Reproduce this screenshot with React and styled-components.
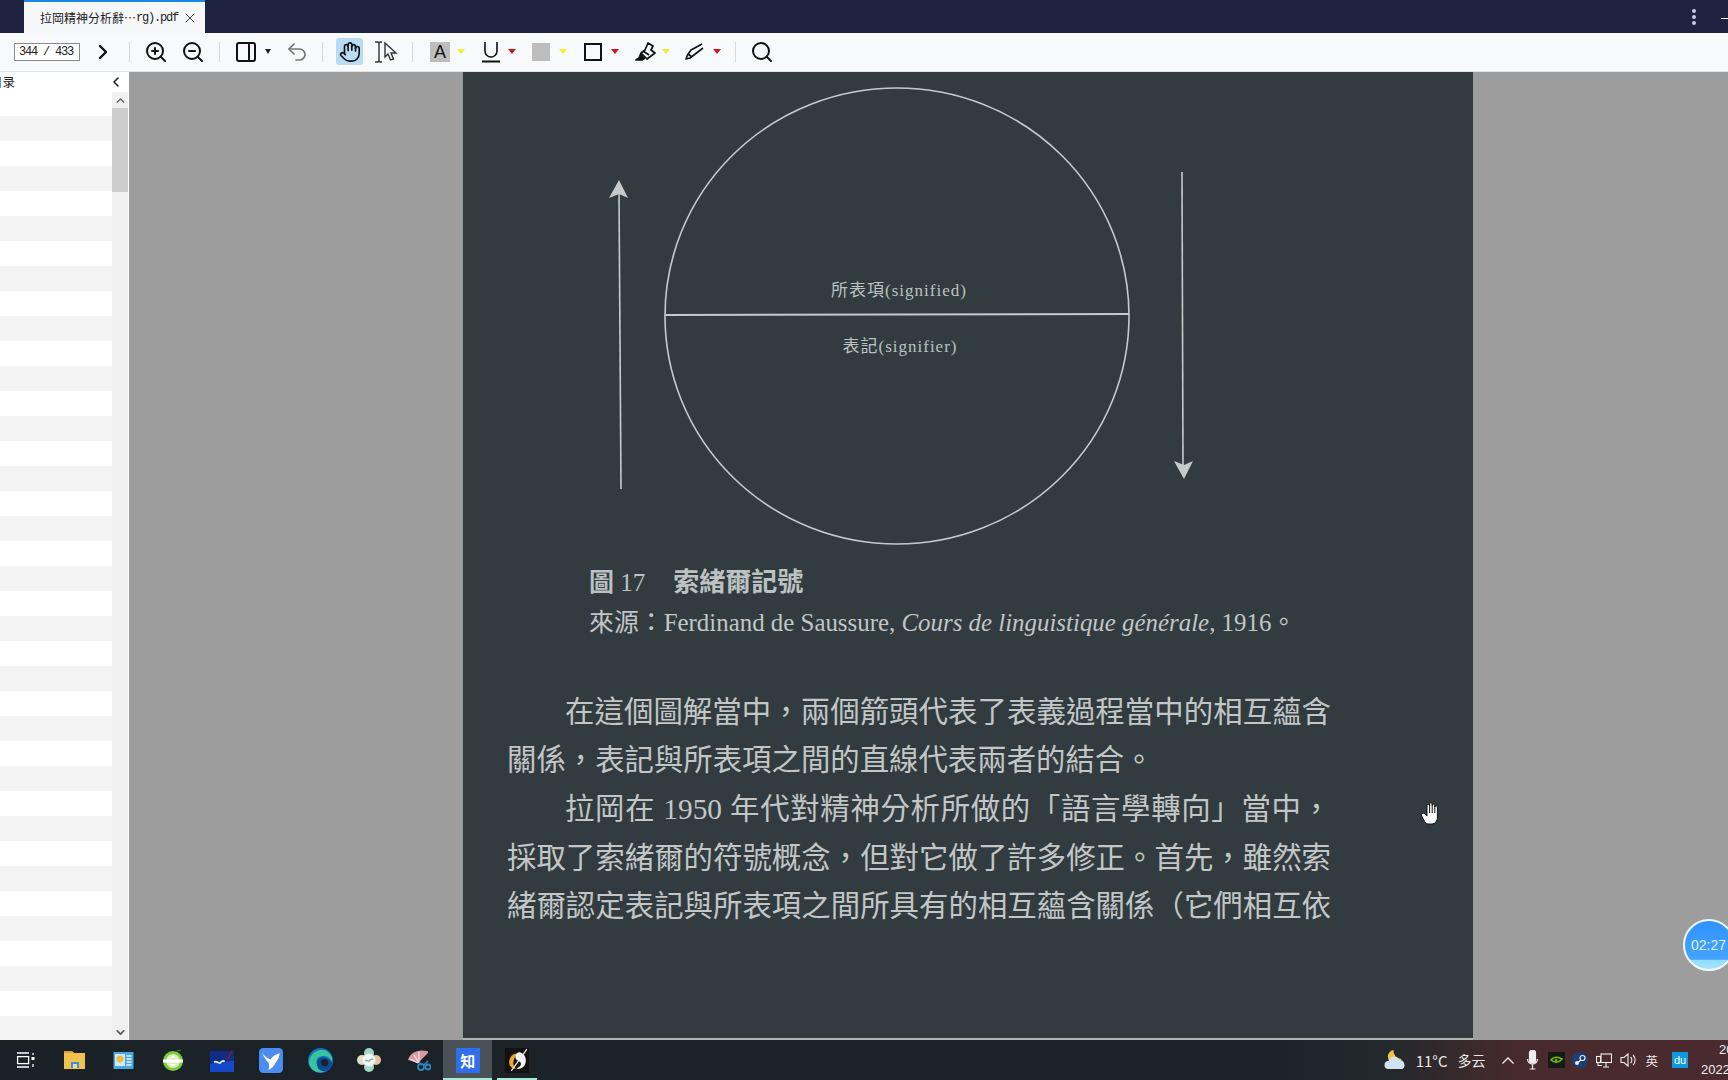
import React from 'react';
import styled, { createGlobalStyle } from 'styled-components';
import { ChevronRight, ChevronLeft, ChevronUp, ChevronDown, ZoomIn, ZoomOut, PanelRight, Undo2, Hand, Search, X } from 'lucide-react';

const Global = createGlobalStyle`
  html, body { margin: 0; padding: 0; background: #9d9d9d; overflow: hidden; }
  #root { width: 1728px; height: 1080px; }
  * { box-sizing: border-box; }
`;
const Shell = styled.div`
  position: relative; width: 1728px; height: 1080px; overflow: hidden;
  display: flex; flex-direction: column;
  font-family: "Liberation Sans", "Noto Sans CJK SC", sans-serif;
`;
const TitleBar = styled.div`
  height: 33px; background: #1c2240; display: flex; align-items: flex-end; padding-left: 24px; flex: none;
`;
const Tab = styled.div`
  width: 181px; height: 33px; background: #f6f7f9; border-top: 2px solid #1a86e8;
  display: flex; align-items: center; padding-left: 16px; color: #222; font-size: 12px;
  font-family: "Noto Sans CJK SC", sans-serif;
`;
const Mono = styled.span`
  font-family: "Liberation Mono", monospace; font-size: 12px; letter-spacing: -1.2px;
`;
const TabClose = styled.span`
  display: flex; margin-left: 4px; color: #444;
`;
const WinControls = styled.div`
  margin-left: auto; height: 33px; display: flex; align-items: center; gap: 25px;
`;
const Dots = styled.div`
  display: flex; flex-direction: column; gap: 2px;
`;
const Dot = styled.span`
  width: 4px; height: 4px; border-radius: 50%; background: #c6cbe0;
`;
const Dash = styled.span`
  width: 7px; height: 1px; background: #fff; margin-top: 3px;
`;
const Toolbar = styled.div`
  height: 39px; flex: none; background: #f8f9fa; border-bottom: 1px solid #e2e2e2;
  display: flex; align-items: center; padding-left: 14px; padding-bottom: 1px;
`;
const PageInput = styled.div`
  width: 66px; height: 18px; border: 1px solid #8a8a8a; background: #fff; color: #222;
  display: flex; align-items: center; padding-left: 4px;
`;
const Tool = styled.div`
  flex: none; width: ${p => p.$w}px; height: ${p => p.$h || 24}px; margin-left: ${p => p.$ml || 0}px;
  display: flex; align-items: center; justify-content: center; color: ${p => p.$color || '#111'};
  background: ${p => p.$bg || 'transparent'}; border-radius: ${p => p.$radius || 0}px;
`;
const Sep = styled.div`
  flex: none; width: 1px; height: 20px; background: #d8d8d8; margin-left: ${p => p.$ml}px;
`;
const Caret = styled.div`
  flex: none; width: 0; height: 0; margin-left: ${p => p.$ml}px;
  border-left: ${p => p.$size || 4.5}px solid transparent; border-right: ${p => p.$size || 4.5}px solid transparent;
  border-top: 5px solid ${p => p.$color};
`;
const LetterBox = styled.div`
  flex: none; width: 20px; height: 20px; margin-left: ${p => p.$ml}px; background: #bdbdbd; color: #111;
  font-size: 18px; display: flex; align-items: center; justify-content: center; line-height: 1;
`;
const GrayBox = styled.div`
  flex: none; width: 18px; height: 18px; margin-left: ${p => p.$ml}px; background: #bdbdbd;
`;
const SquareBox = styled.div`
  flex: none; width: 18px; height: 18px; margin-left: ${p => p.$ml}px; border: 2px solid #111;
`;
const Body = styled.div`
  flex: 1; min-height: 0; display: flex; overflow: hidden;
`;
const Sidebar = styled.aside`
  width: 129px; flex: none; background: #fff; display: flex; flex-direction: column; overflow: hidden;
`;
const SideHead = styled.div`
  height: 19px; flex: none; display: flex; align-items: center; justify-content: space-between;
  padding-right: 5px; font-size: 12.5px; color: #222;
  font-family: "Noto Sans CJK SC", sans-serif;
`;
const SideTitle = styled.span`
  margin-left: -10px;
`;
const SideMain = styled.div`
  flex: 1; min-height: 0; display: flex; padding-right: 1px;
`;
const Rows = styled.div`
  flex: 1; min-width: 0; overflow: hidden;
`;
const Row = styled.div`
  height: 25px; background: ${p => (p.$alt ? '#f3f3f3' : '#fff')};
`;
const Scrollbar = styled.div`
  width: 16px; flex: none; background: #f0f0f0; display: flex; flex-direction: column; color: #555; margin-top: 1px;
`;
const ScrollBtn = styled.div`
  height: 16px; flex: none; display: flex; align-items: center; justify-content: center;
`;
const Thumb = styled.div`
  height: 84px; flex: none; background: #cdcdcd;
`;
const Spacer = styled.div`
  flex: 1;
`;
const Viewer = styled.main`
  flex: 1; background: #9d9d9d; overflow: hidden; padding-left: 333px;
`;
const PageSheet = styled.article`
  width: 1011px; height: 968px; background: #323c40; color: #c2c6c6; overflow: hidden;
  border-left: 1px solid #8f9797; border-bottom: 2px solid #aeb3b3;
  font-family: "Liberation Serif", "Noto Sans CJK TC", serif;
`;
const Diagram = styled.svg`
  display: block; width: 1010px; height: 492px;
`;
const Caption = styled.div`
  height: 39px; line-height: 38px; padding-left: 126px; font-size: 25px; white-space: nowrap; color: #bcc1c1;
`;
const CaptionMark = styled.b`
  font-weight: 700;
`;
const CaptionTitle = styled.b`
  font-size: 26px; margin-left: 28px; font-weight: 700;
`;
const Source = styled.div`
  height: 40px; line-height: 40px; padding-left: 126px; font-size: 24.9px; white-space: nowrap;
`;
const Article = styled.div`
  margin-top: 44.5px; padding-left: 44px; width: 868px; font-size: 29.4px; line-height: 48.7px;
`;
const Line = styled.div`
  text-align: ${p => (p.$short ? 'left' : 'justify')}; text-align-last: ${p => (p.$short ? 'left' : 'justify')};
  padding-left: ${p => (p.$indent ? 58 : 0)}px;
`;
const Taskbar = styled.footer`
  height: 40px; flex: none; display: flex; align-items: center; padding-left: 0.5px;
  background: linear-gradient(to right, #1a2228 0%, #1c2328 72%, #22282c 80%, #482a2c 88%, #4a2a2e 100%);
`;
const TaskCell = styled.div`
  position: relative; width: 49.2px; height: 40px; flex: none; display: flex; align-items: center; justify-content: center;
  background: ${p => (p.$active ? '#4a5257' : 'transparent')};
`;
const Indicator = styled.span`
  position: absolute; left: ${p => p.$inset}px; right: ${p => p.$inset}px; bottom: 0; height: 2px; background: #a5ecd8;
`;
const Zhi = styled.div`
  width: 24px; height: 25px; background: #2f6fee; color: #fff; font-size: 15px; font-weight: 700;
  display: flex; align-items: center; justify-content: center; font-family: "Noto Sans CJK SC", sans-serif;
`;
const Tray = styled.div`
  margin-left: auto; height: 40px; display: flex; align-items: center; color: #e8e8e8; font-size: 15px;
  font-family: "Noto Sans CJK SC", sans-serif;
`;
const TrayItem = styled.div`
  flex: none; margin-left: ${p => p.$ml}px; display: flex; align-items: center; justify-content: center; white-space: nowrap;
  font-size: ${p => p.$fs || 14}px;
`;
const Du = styled.div`
  width: 16px; height: 16px; background: #0f9ae0; color: #fff; font-size: 11px; font-family: "Liberation Sans", sans-serif;
  display: flex; align-items: center; justify-content: center;
`;
const Clock = styled.div`
  width: 27px; margin-left: 13px; flex: none; overflow: hidden; font-size: 13px; color: #eee; line-height: 20px;
  font-family: "Liberation Sans", sans-serif;
`;
const ClockTop = styled.div`
  padding-left: 18px;
`;
const Timer = styled.div`
  position: absolute; left: 1683px; top: 919px; width: 52px; height: 52px; border-radius: 50%; border: 2px solid #f2f8fa;
  background: linear-gradient(to bottom, #2f93ff 0%, #45a4fb 80%, #8fdcff 81%, #a6e4fb 100%);
  color: #dff4ff; font-size: 14px; display: flex; align-items: center; justify-content: center; padding-right: 1px;
  font-family: "Liberation Sans", sans-serif;
`;
const Cursor = styled.div`
  position: absolute; left: 1418px; top: 800px; display: flex;
`;

const stroke = '#c6caca';

function TaskIcons() {
  return [
    <svg key="a" width="22" height="22" viewBox="0 0 22 22" fill="none" stroke="#fff" strokeWidth="1.3">
      <path d="M3 4h12M3 18h12" /><rect x="3.6" y="7.6" width="11" height="7" /><path d="M19 4v2M19 15v3" /><rect x="17.5" y="8" width="3" height="3" fill="#fff" stroke="none" />
    </svg>,
    <svg key="b" width="23" height="20" viewBox="0 0 23 20">
      <path d="M1 1h8l2 2h11v16H1z" fill="#f2c14e" /><path d="M1 1h8l2 2H1z" fill="#e0a030" /><rect x="8" y="12" width="8" height="6" fill="#3a8fd8" /><rect x="10" y="14" width="4" height="4" fill="#f2d98e" />
    </svg>,
    <svg key="c" width="21" height="17" viewBox="0 0 20 17">
      <rect width="20" height="17" fill="#4aa6e0" /><rect x="1.5" y="2" width="10" height="12" fill="#cfe9f8" /><circle cx="6.5" cy="7" r="3.5" fill="#f0b93a" /><path d="M13 4h5M13 7h5M13 10h5M13 13h5" stroke="#eaf6fd" strokeWidth="1.4" />
    </svg>,
    <svg key="d" width="22" height="23" viewBox="0 0 22 23">
      <circle cx="11" cy="12" r="10" fill="#7ecb3f" /><circle cx="11" cy="12" r="7" fill="#d8efb9" /><rect x="1" y="10.5" width="20" height="3" fill="#fff" /><path d="M8 9l3-3 3 3zM8 15l3 3 3-3z" fill="#fff" /><path d="M15 2l4-1" stroke="#3c8a2a" strokeWidth="1.2" />
    </svg>,
    <svg key="e" width="24" height="23" viewBox="0 0 23 22">
      <rect y="2" width="23" height="20" fill="#1447c9" /><path d="M0 2h23v9L0 14z" fill="#0f2c86" /><path d="M4 13c2-3 4 2 6 0s3-2 4-1" stroke="#dff" strokeWidth="1.6" fill="none" /><path d="M15 10l6-9 1 1-5 9z" fill="#6a2030" />
    </svg>,
    <svg key="f" width="24" height="25" viewBox="0 0 23 24">
      <rect width="23" height="24" rx="4" fill="#4d8df0" /><path d="M3 5c3 3 5 5 8 6 2-3 5-5 9-6-1 4-2 7-4 9-1 3-4 6-7 7 1-3 1-5 0-7-2-2-4-5-6-9z" fill="#fff" />
    </svg>,
    <svg key="g" width="25" height="25" viewBox="0 0 24 24">
      <circle cx="12" cy="12" r="12" fill="#1a6fbf" /><path d="M1 13C2 5 9 1 15 2c5 1 9 6 8 11-2-4-6-6-10-5-5 1-6 5-4 9 1 2 4 4 8 4-2 2-5 3-8 2C4 22 1 18 1 13z" fill="#37c5a0" /><path d="M9 13c0-3 3-4 6-4 4 0 7 3 8 6-1 5-6 8-9 7-3 0-6-3-5-9z" fill="#0c4a96" /><circle cx="16" cy="14" r="3.5" fill="#1b2329" />
    </svg>,
    <svg key="h" width="24" height="24" viewBox="0 0 24 24">
      <circle cx="12" cy="5" r="5" fill="#9cd6c6" /><circle cx="12" cy="19" r="5" fill="#a3d9c9" /><circle cx="5" cy="12" r="5" fill="#e9dcc4" /><circle cx="19" cy="12" r="5" fill="#e6c29e" /><circle cx="12" cy="12" r="6.5" fill="#eef5f2" /><path d="M8 13c2-2 3 1 4 0s3-3 4-1" stroke="#6fa8c4" strokeWidth="1.3" fill="none" />
    </svg>,
    <svg key="i" width="24" height="24" viewBox="0 0 24 24">
      <path d="M1 12C3 5 10 1 20 3c2 1 1 2 0 3L11 15z" fill="#d89aa2" /><path d="M3 11l8 4M7 7l5 8M12 4l0 11" stroke="#f3e3e3" strokeWidth="1.2" /><circle cx="14" cy="19" r="3" fill="none" stroke="#2e86b8" strokeWidth="1.8" /><circle cx="21" cy="19" r="2.5" fill="none" stroke="#2e86b8" strokeWidth="1.8" /><path d="M12 14l3 3M21 13l-4 4" stroke="#2e86b8" strokeWidth="1.6" />
    </svg>,
    <Zhi key="j">知</Zhi>,
    <svg key="k" width="24" height="25" viewBox="0 0 23 24">
      <rect width="23" height="24" fill="#15110e" /><path d="M4 14c0-6 4-9 9-9-3 2-5 6-5 10 0 3 2 4 3 5-4 0-7-2-7-6z" fill="#e8a92c" /><path d="M14 4c4 1 6 4 6 8 0 5-4 9-9 8 3-2 5-3 4-6-1-2-5-2-5-5 0-3 2-5 4-5z" fill="#f4f4f4" /><path d="M21 1L6 22" stroke="#eee" strokeWidth="1.2" />
    </svg>,
  ];
}

export default function App() {
  const icons = TaskIcons();
  return (
    <Shell>
      <Global />
      <TitleBar>
        <Tab>
          拉岡精神分析辭<span>⋯</span><Mono>rg).pdf</Mono>
          <TabClose><X size={16} strokeWidth={1.5} /></TabClose>
        </Tab>
        <WinControls>
          <Dots><Dot /><Dot /><Dot /></Dots>
          <Dash />
        </WinControls>
      </TitleBar>
      <Toolbar>
        <PageInput><Mono>344 / 433</Mono></PageInput>
        <Tool $w={24} $ml={11}><ChevronRight size={24} strokeWidth={2.4} /></Tool>
        <Sep $ml={14} />
        <Tool $w={24} $ml={14}><ZoomIn size={24} strokeWidth={2} /></Tool>
        <Tool $w={24} $ml={13}><ZoomOut size={24} strokeWidth={2} /></Tool>
        <Sep $ml={14} />
        <Tool $w={24} $ml={14}><PanelRight size={24} strokeWidth={2} /></Tool>
        <Caret $ml={7} $size={3.5} $color="#222" />
        <Tool $w={24} $ml={14} $color="#777"><Undo2 size={24} strokeWidth={1.7} /></Tool>
        <Sep $ml={13} />
        <Tool $w={27} $h={27} $ml={13} $bg="#b9dcf5" $radius={3}><Hand size={22} strokeWidth={1.8} /></Tool>
        <Tool $w={24} $ml={11} $color="#444">
          <svg width="24" height="24" viewBox="0 0 24 24" fill="none" stroke="#333" strokeWidth="1.4">
            <path d="M1 2h3l1 1 1-1h2M5 3v18M1 22h3l1-1 1 1h2" />
            <path d="M11 3l11 10h-5l2.500 6-3 1-2.500-6-3 3z" fill="#f8f9fa" />
          </svg>
        </Tool>
        <Sep $ml={14} />
        <LetterBox $ml={17}>A</LetterBox>
        <Caret $ml={7} $color="#f3ee2a" />
        <Tool $w={22} $ml={15}>
          <svg width="20" height="22" viewBox="0 0 20 22" fill="none" stroke="#111" strokeWidth="1.6">
            <path d="M4 1v9a6 6 0 0 0 12 0V1" /><path d="M1 20.500h18" strokeWidth="2" />
          </svg>
        </Tool>
        <Caret $ml={6} $color="#d2121c" />
        <GrayBox $ml={16} />
        <Caret $ml={9} $color="#f3ee2a" />
        <SquareBox $ml={17} />
        <Caret $ml={9} $color="#d2121c" />
        <Tool $w={22} $ml={16}>
          <svg width="22" height="20" viewBox="0 0 22 20" fill="none" stroke="#111" strokeWidth="1.7" strokeLinejoin="round">
            <path d="M13 1l5 3-2 4 4 3-8 6-6-6 4-3z" />
            <path d="M8 9l6 4" />
            <path d="M6 11l-2 5-3 2h6l3-2" fill="#111" />
          </svg>
        </Tool>
        <Caret $ml={5} $color="#f3ee2a" />
        <Tool $w={22} $ml={13}>
          <svg width="20" height="18" viewBox="0 0 20 18" fill="none" stroke="#111" strokeWidth="1.6" strokeLinejoin="round">
            <path d="M18 1L7 7 3.500 12 2 16l4-1 4-3 9-7" />
            <path d="M4 11l4 3" />
          </svg>
        </Tool>
        <Caret $ml={8} $color="#d2121c" />
        <Sep $ml={14} />
        <Tool $w={24} $ml={14}><Search size={24} strokeWidth={2} /></Tool>
      </Toolbar>
      <Body>
        <Sidebar>
          <SideHead>
            <SideTitle>目录</SideTitle>
            <ChevronLeft size={16} strokeWidth={2.4} color="#222" />
          </SideHead>
          <SideMain>
            <Rows>
              {Array.from({ length: 40 }, (_, i) => <Row key={i} $alt={i % 2 === 1} />)}
            </Rows>
            <Scrollbar>
              <ScrollBtn><ChevronUp size={13} strokeWidth={2.6} /></ScrollBtn>
              <Thumb />
              <Spacer />
              <ScrollBtn><ChevronDown size={13} strokeWidth={3} /></ScrollBtn>
            </Scrollbar>
          </SideMain>
        </Sidebar>
        <Viewer>
          <PageSheet>
            <Diagram viewBox="-1 0 1010 492">
              <ellipse cx="433" cy="244" rx="232" ry="228" fill="none" stroke={stroke} strokeWidth="1.6" />
              <path d="M201 243L665 242" stroke={stroke} strokeWidth="2" />
              <path d="M157 417L155 120" stroke={stroke} strokeWidth="1.6" />
              <path d="M155 108l9 18-9-4-10 4z" fill={stroke} />
              <path d="M718 100L719 395" stroke={stroke} strokeWidth="1.6" />
              <path d="M720 407l-10-18 10 4 9-4z" fill={stroke} />
              <text x="435" y="224" textAnchor="middle" fontSize="17" letterSpacing="1" fill="#bcc1c1">所表項(signified)</text>
              <text x="436" y="280" textAnchor="middle" fontSize="17" letterSpacing="1" fill="#bcc1c1">表記(signifier)</text>
            </Diagram>
            <Caption><CaptionMark>圖</CaptionMark> 17<CaptionTitle>索緒爾記號</CaptionTitle></Caption>
            <Source>來源：Ferdinand de Saussure, <i>Cours de linguistique générale</i>, 1916。</Source>
            <Article>
              <Line $indent>在這個圖解當中，兩個箭頭代表了表義過程當中的相互蘊含</Line>
              <Line $short>關係，表記與所表項之間的直線代表兩者的結合。</Line>
              <Line $indent>拉岡在 1950 年代對精神分析所做的「語言學轉向」當中，</Line>
              <Line>採取了索緒爾的符號概念，但對它做了許多修正。首先，雖然索</Line>
              <Line>緒爾認定表記與所表項之間所具有的相互蘊含關係（它們相互依</Line>
            </Article>
          </PageSheet>
        </Viewer>
      </Body>
      <Taskbar>
        {icons.map((icon, i) => (
          <TaskCell key={i} $active={i === 9}>
            {icon}
            {i === 9 && <Indicator $inset={0} />}
            {i === 10 && <Indicator $inset={5} />}
          </TaskCell>
        ))}
        <Tray>
          <TrayItem $ml={0}>
            <svg width="24" height="22" viewBox="0 0 21 22">
              <path d="M10 1a7 7 0 1 0 8 9 8 8 0 0 1-8-9z" fill="#f5c542" />
              <path d="M5 20a4 4 0 0 1 0-8 6 6 0 0 1 11-1 5 5 0 0 1 3 9z" fill="#cfe3f5" />
            </svg>
          </TrayItem>
          <TrayItem $ml={10} $fs={15}>11°C</TrayItem>
          <TrayItem $ml={10}>多云</TrayItem>
          <TrayItem $ml={17}>
            <svg width="12" height="7" viewBox="0 0 12 7" fill="none" stroke="#eee" strokeWidth="1.3"><path d="M0.500 6.500L6 1l5.500 5.500" /></svg>
          </TrayItem>
          <TrayItem $ml={13}>
            <svg width="11" height="20" viewBox="0 0 11 20" fill="none" stroke="#eee" strokeWidth="1.2"><rect x="2.500" y="0" width="6" height="13" rx="3" fill="#eee" /><path d="M0.500 9a5 5 0 0 0 10 0M5.500 14v5M2.500 19h6" /></svg>
          </TrayItem>
          <TrayItem $ml={10}>
            <svg width="17" height="16" viewBox="0 0 17 16"><rect width="17" height="16" fill="#141a16" /><path d="M3 8c2-3 7-4 11-1-3 4-8 4-11 1z" fill="none" stroke="#76b900" strokeWidth="1.6" /><circle cx="8" cy="8" r="1.300" fill="#76b900" /></svg>
          </TrayItem>
          <TrayItem $ml={7}>
            <svg width="16" height="16" viewBox="0 0 16 16"><circle cx="8" cy="8" r="8" fill="#1b3f72" /><circle cx="10.500" cy="6" r="2.500" fill="none" stroke="#e6eef7" strokeWidth="1.200" /><circle cx="5" cy="11" r="2" fill="#e6eef7" /><path d="M5 11l4-3" stroke="#e6eef7" strokeWidth="1.400" /></svg>
          </TrayItem>
          <TrayItem $ml={8}>
            <svg width="16" height="15" viewBox="0 0 16 15" fill="none" stroke="#eee" strokeWidth="1.1"><rect x="5" y="1" width="10.500" height="8.500" /><rect x="0.500" y="3.500" width="4" height="6" /><path d="M2 9.500v3h4M10 9.500v4M7 14h6" /></svg>
          </TrayItem>
          <TrayItem $ml={8}>
            <svg width="17" height="16" viewBox="0 0 17 16" fill="none" stroke="#eee" strokeWidth="1.1"><path d="M1 5.500h3L8 2v12L4 10.500H1z" /><path d="M10.500 5a4 4 0 0 1 0 6M13 3a7 7 0 0 1 0 10" /></svg>
          </TrayItem>
          <TrayItem $ml={8} $fs={12.5}>英</TrayItem>
          <TrayItem $ml={14}><Du>du</Du></TrayItem>
          <Clock>
            <ClockTop>20</ClockTop>
            <div>2022</div>
          </Clock>
        </Tray>
      </Taskbar>
      <Timer>02:27</Timer>
      <Cursor>
        <svg width="24" height="26" viewBox="0 0 24 26">
          <path d="M3 14l3-1 3 3V5.500a1.300 1.300 0 0 1 2.600 0V4a1.300 1.300 0 0 1 2.600 0v1.500a1.300 1.300 0 0 1 2.600 0V7a1.300 1.300 0 0 1 2.600 0v10c0 4-2 7-6 7h-3c-3 0-5-4-7.400-10z" fill="#fff" stroke="#111" strokeWidth="1" />
          <path d="M11.600 5v8M14.200 4v9M16.800 5.500V13" stroke="#111" strokeWidth="1" />
        </svg>
      </Cursor>
    </Shell>
  );
}
